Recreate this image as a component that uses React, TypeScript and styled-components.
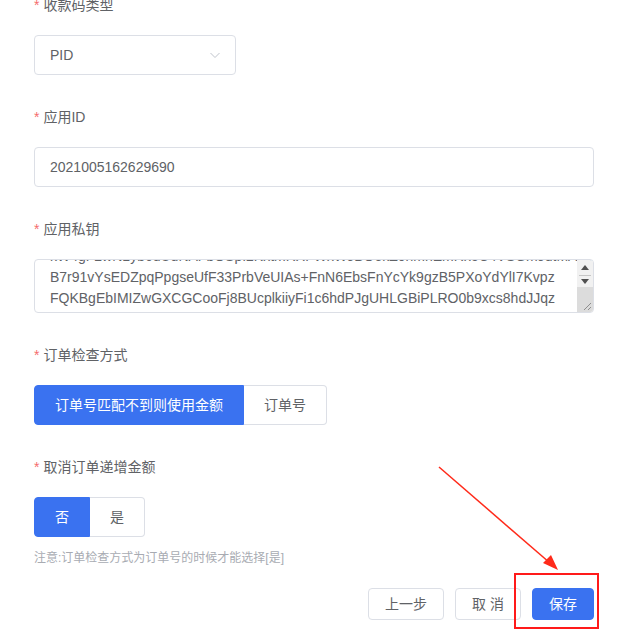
import React, { useEffect, useRef } from "react";
import styled, { createGlobalStyle } from "styled-components";

const keyLines = [
  "MIIEvgIBADANBgkqhkiG9w0BAQEFAASCBKgwggSkAgEAAoIBAQCx8Lm2aRqcT0vZ",
  "kW4gF2wN1yb6dUdNAFbOSpI2KxtmRXFWxWJBOekZ0hmhEmRx5C4VSGmJdtMA3oIa",
  "B7r91vYsEDZpqPpgseUfF33PrbVeUIAs+FnN6EbsFnYcYk9gzB5PXoYdYlI7Kvpz",
  "FQKBgEbIMIZwGXCGCooFj8BUcplkiiyFi1c6hdPJgUHLGBiPLRO0b9xcs8hdJJqz",
  "Qx0dW2bV9m7tLr5aHs3nYpEf1cKZo8uGJqTwXyN4eM6vRiBlsOPa2Dk5hCgUzIFn",
];

const GlobalStyle = createGlobalStyle`
  html, body {
    margin: 0;
    padding: 0;
    background: #ffffff;
  }
  body {
    font-family: "Liberation Sans", "Noto Sans CJK SC", sans-serif;
    font-size: 14px;
    color: #606266;
    overflow: hidden;
  }
`;

const Page = styled.div`
  position: relative;
  width: 627px;
  height: 638px;
  overflow: hidden;
`;

const Form = styled.div`
  display: flex;
  flex-direction: column;
  margin-top: -15px;
  padding-left: 34px;
  width: 560px;
`;

const FormItem = styled.div`
  display: flex;
  flex-direction: column;
  align-items: flex-start;
  margin-bottom: 22px;
`;

const Label = styled.div`
  height: 40px;
  line-height: 40px;
  margin-bottom: 10px;
  font-size: 14px;
  color: #606266;

  &::before {
    content: "*";
    color: #f56c6c;
    margin-right: 4px;
  }
`;

const Select = styled.div`
  box-sizing: border-box;
  display: flex;
  align-items: center;
  justify-content: space-between;
  width: 202px;
  height: 40px;
  padding: 0 14px 0 15px;
  border: 1px solid #dcdfe6;
  border-radius: 4px;
  color: #606266;
  font-size: 14px;
`;

const Input = styled.div`
  box-sizing: border-box;
  display: flex;
  align-items: center;
  width: 560px;
  height: 40px;
  padding: 0 15px;
  border: 1px solid #dcdfe6;
  border-radius: 4px;
  color: #606266;
  font-size: 14px;
`;

const AreaWrap = styled.div`
  position: relative;
  width: 560px;
  height: 54px;
`;

const TextArea = styled.textarea`
  box-sizing: border-box;
  display: block;
  width: 560px;
  height: 54px;
  padding: 5px 32px 5px 15px;
  border: 1px solid #dcdfe6;
  border-radius: 4px;
  color: #606266;
  font-family: "Liberation Sans", "Noto Sans CJK SC", sans-serif;
  font-size: 14px;
  line-height: 21px;
  resize: none;
  white-space: pre;
  overflow: hidden;
  outline: none;
`;

const ScrollBar = styled.div`
  position: absolute;
  top: 1px;
  right: 1px;
  bottom: 1px;
  width: 16px;
  display: flex;
  flex-direction: column;
  background: #f1f1f1;
  border-radius: 0 3px 3px 0;
  overflow: hidden;
`;

const ScrollButton = styled.div<{ $h: number }>`
  display: flex;
  align-items: center;
  justify-content: center;
  height: ${(p) => p.$h}px;
`;

const ScrollSep = styled.div`
  height: 1px;
  margin: 0 2px;
  background: #c6c6c6;
`;

const Grip = styled.div`
  flex: 1;
  display: flex;
  align-items: flex-end;
  justify-content: flex-end;
  background: #dcdcdc;
  padding: 0 2px 2px 0;
`;

const Group = styled.div`
  display: flex;
`;

const Segment = styled.div<{ $active?: boolean; $first?: boolean; $last?: boolean }>`
  box-sizing: border-box;
  height: 40px;
  line-height: 38px;
  padding: 0 20px;
  font-size: 14px;
  border: 1px solid ${(p) => (p.$active ? "#3a72f0" : "#dcdfe6")};
  border-left-width: ${(p) => (p.$first ? "1px" : "0")};
  background: ${(p) => (p.$active ? "#3a72f0" : "#ffffff")};
  color: ${(p) => (p.$active ? "#ffffff" : "#606266")};
  border-radius: ${(p) => (p.$first ? "4px 0 0 4px" : p.$last ? "0 4px 4px 0" : "0")};
`;

const Note = styled.div`
  margin-top: 13px;
  font-size: 12px;
  line-height: 16px;
  color: #a8abb2;
`;

const Footer = styled.div`
  display: flex;
  justify-content: flex-end;
  gap: 11px;
  width: 560px;
`;

const Button = styled.div<{ $primary?: boolean }>`
  box-sizing: border-box;
  height: 32px;
  line-height: 30px;
  padding: 0 16px;
  font-size: 14px;
  border-radius: 4px;
  border: 1px solid ${(p) => (p.$primary ? "#3a72f0" : "#dcdfe6")};
  background: ${(p) => (p.$primary ? "#3a72f0" : "#ffffff")};
  color: ${(p) => (p.$primary ? "#ffffff" : "#606266")};
`;

const Annotation = styled.svg`
  position: absolute;
  left: 0;
  top: 0;
  width: 627px;
  height: 638px;
  pointer-events: none;
`;

const Chevron = () => (
  <svg width="12" height="12" viewBox="0 0 12 12" fill="none">
    <path d="M1.5 4L6 8.5L10.5 4" stroke="#c0c4cc" strokeWidth="1" />
  </svg>
);

const Triangle = ({ up }: { up?: boolean }) => (
  <svg width="8" height="5" viewBox="0 0 8 5">
    <polygon points={up ? "0,5 8,5 4,0" : "0,0 8,0 4,5"} fill="#505050" />
  </svg>
);

export default function App() {
  const areaRef = useRef<HTMLTextAreaElement>(null);

  useEffect(() => {
    if (areaRef.current) {
      areaRef.current.scrollTop = 21 * 2 - 2;
    }
  }, []);

  return (
    <Page>
      <GlobalStyle />
      <Form>
        <FormItem>
          <Label>收款码类型</Label>
          <Select>
            <span>PID</span>
            <Chevron />
          </Select>
        </FormItem>

        <FormItem>
          <Label>应用ID</Label>
          <Input>2021005162629690</Input>
        </FormItem>

        <FormItem>
          <Label>应用私钥</Label>
          <AreaWrap>
            <TextArea ref={areaRef} readOnly value={keyLines.join("\n")} />
            <ScrollBar>
              <ScrollButton $h={15}>
                <Triangle up />
              </ScrollButton>
              <ScrollSep />
              <ScrollButton $h={11}>
                <Triangle />
              </ScrollButton>
              <Grip>
                <svg width="8" height="8" viewBox="0 0 8 8">
                  <line x1="8" y1="1" x2="1" y2="8" stroke="#7a7a7a" strokeWidth="0.8" />
                  <line x1="8" y1="5" x2="5" y2="8" stroke="#7a7a7a" strokeWidth="0.8" />
                </svg>
              </Grip>
            </ScrollBar>
          </AreaWrap>
        </FormItem>

        <FormItem>
          <Label>订单检查方式</Label>
          <Group>
            <Segment $active $first>
              订单号匹配不到则使用金额
            </Segment>
            <Segment $last>订单号</Segment>
          </Group>
        </FormItem>

        <FormItem>
          <Label>取消订单递增金额</Label>
          <Group>
            <Segment $active $first>
              否
            </Segment>
            <Segment $last>是</Segment>
          </Group>
          <Note>注意:订单检查方式为订单号的时候才能选择[是]</Note>
        </FormItem>

        <Footer>
          <Button>上一步</Button>
          <Button>取 消</Button>
          <Button $primary>保存</Button>
        </Footer>
      </Form>

      <Annotation viewBox="0 0 627 638">
        <line x1="439" y1="467" x2="550" y2="563" stroke="#ff2a1a" strokeWidth="1.5" />
        <polygon points="558,570 543,563 551,555" fill="#ff2a1a" />
        <rect x="515" y="574" width="83" height="54" fill="none" stroke="#ff1a1a" strokeWidth="2" />
      </Annotation>
    </Page>
  );
}
